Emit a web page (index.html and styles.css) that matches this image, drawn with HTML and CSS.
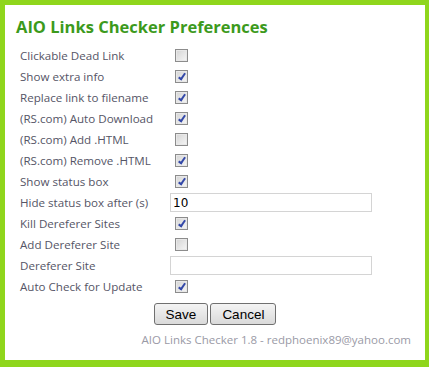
FILE: index.html
```html
<!DOCTYPE html>
<html lang="en">
<head>
  <meta charset="UTF-8" />
  <title>AIO Links Checker Preferences</title>
  <link rel="stylesheet" href="styles.css">
</head>
<body>
  <div class="prefs">
    <h1>AIO Links Checker Preferences</h1>
    <div class="rows">
      <label class="name">Clickable Dead Link</label>
      <div class="field"><input type="checkbox" /></div>

      <label class="name">Show extra info</label>
      <div class="field"><input type="checkbox" checked /></div>

      <label class="name">Replace link to filename</label>
      <div class="field"><input type="checkbox" checked /></div>

      <label class="name">(RS.com) Auto Download</label>
      <div class="field"><input type="checkbox" checked /></div>

      <label class="name">(RS.com) Add .HTML</label>
      <div class="field"><input type="checkbox" /></div>

      <label class="name">(RS.com) Remove .HTML</label>
      <div class="field"><input type="checkbox" checked /></div>

      <label class="name">Show status box</label>
      <div class="field"><input type="checkbox" checked /></div>

      <label class="name">Hide status box after (s)</label>
      <div class="field"><input type="text" class="text" value="10" /></div>

      <label class="name">Kill Dereferer Sites</label>
      <div class="field"><input type="checkbox" checked /></div>

      <label class="name">Add Dereferer Site</label>
      <div class="field"><input type="checkbox" /></div>

      <label class="name">Dereferer Site</label>
      <div class="field"><input type="text" class="text" value="" /></div>

      <label class="name">Auto Check for Update</label>
      <div class="field"><input type="checkbox" checked /></div>
    </div>
    <div class="actions">
      <button>Save</button>
      <button>Cancel</button>
    </div>
    <div class="footer">AIO Links Checker 1.8 - redphoenix89@yahoo.com</div>
  </div>
</body>
</html>
```

FILE: styles.css
```css
* {
  box-sizing: border-box;
}
html, body {
  height: 100%;
}
body {
  margin: 0;
  background: #8fd61c;
  padding: 5px 4px 7px 5px;
  font-family: "Open Sans", sans-serif;
}
.prefs {
  background: #fff;
  height: 100%;
  padding: 10px 14px 0 11px;
}
.prefs h1 {
  margin: 0 0 6px;
  font-size: 16.5px;
  font-weight: bold;
  color: #3c9a1c;
  line-height: 24px;
}
.rows {
  display: grid;
  grid-template-columns: 150px 202px;
  grid-auto-rows: 21px;
  padding-left: 4px;
}
.name {
  font-size: 11.6px;
  color: #555566;
  line-height: 21px;
}
.field {
  display: flex;
  align-items: center;
}
.field input[type=checkbox] {
  appearance: none;
  -webkit-appearance: none;
  position: relative;
  width: 13px;
  height: 13px;
  margin: 0 0 0 5px;
  border: 1px solid #8c8c8c;
  background: linear-gradient(135deg, #d4d4d4, #f6f6f6);
  box-shadow: inset 0 0 0 1px #e8e8e8;
}
.field input[type=checkbox]:checked::after {
  content: "";
  position: absolute;
  left: 4px;
  top: 1px;
  width: 2px;
  height: 6px;
  border: solid #3348a8;
  border-width: 0 2px 2px 0;
  transform: rotate(35deg);
}
.field .text {
  width: 202px;
  height: 19px;
  border: 1px solid #d4d4d4;
  padding: 0 2px;
  font-family: "DejaVu Sans", sans-serif;
  font-size: 12px;
  color: #000;
}
.actions {
  display: flex;
  justify-content: center;
  gap: 2px;
  margin-top: 6px;
  padding-left: 3px;
}
.actions button {
  height: 22px;
  padding: 0 11px;
  font-family: "Liberation Sans", sans-serif;
  font-size: 13.5px;
  color: #000;
  border: 1px solid #707070;
  border-radius: 3px;
  background: linear-gradient(#f4f4f4, #dadada);
}
.footer {
  text-align: right;
  margin-top: 7px;
  font-size: 11.5px;
  color: #9a9aa6;
}
```
